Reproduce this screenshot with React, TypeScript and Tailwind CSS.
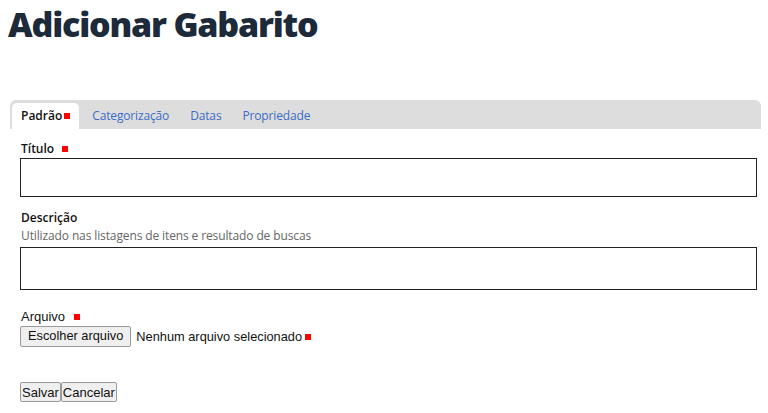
import React from "react";

const Req = ({ className = "" }: { className?: string }) => (
  <span className={`inline-block w-[6px] h-[6px] bg-[#ff0000] align-middle ${className}`} />
);

export default function App() {
  return (
    <div className="bg-white w-[768px] h-[413px] overflow-hidden text-[#222]" style={{ fontFamily: '"Open Sans", sans-serif' }}>
      <h1 className="pl-[8px] pt-[1px] text-[34px] leading-[46px] font-extrabold text-[#1c2a3a] tracking-[-1.2px]">Adicionar Gabarito</h1>
      <div className="ml-[10px] mr-[7px] mt-[53px] bg-[#dddddd] rounded-t-[6px] h-[29px] flex items-end pl-[2px] gap-0">
        <div className="bg-white rounded-t-[5px] h-[26px] px-[9px] flex items-center text-[12px] font-semibold text-[#111]">
          Padrão<Req className="ml-[2px]" />
        </div>
        <div className="h-[26px] flex items-center text-[12px] text-[#3b6cc5] ml-[13px] gap-[21px] tracking-[-0.15px]">
          <span>Categorização</span>
          <span>Datas</span>
          <span>Propriedade</span>
        </div>
      </div>
      <div className="pl-[20px] pr-[11px]">
        <div className="mt-[11px] text-[12px] font-semibold text-[#111] leading-[17px] flex items-center pl-[1px]">
          Título<Req className="ml-[8px]" />
        </div>
        <div className="mt-[1px] h-[39px] border-[#222] border-[1.5px]" />
        <div className="mt-[12px] text-[12px] font-semibold text-[#111] leading-[17px] pl-[1px]">Descrição</div>
        <div className="mt-[1px] text-[12px] text-[#666] leading-[18px] pl-[1px] tracking-[-0.12px]">Utilizado nas listagens de itens e resultado de buscas</div>
        <div className="mt-[2px] h-[43px] border-[#222] border-[1.5px]" />
        <div className="mt-[18px] text-[13px] leading-[17px] text-[#111] flex items-center pl-[1px]" style={{ fontFamily: '"Liberation Sans", sans-serif' }}>
          Arquivo<Req className="ml-[9px]" />
        </div>
        <div className="flex items-center mt-[1px]" style={{ fontFamily: '"Liberation Sans", sans-serif' }}>
          <button className="h-[21px] px-[7px] text-[12.8px] bg-[#efefef] border border-[#9a9a9a] rounded-[2px] text-[#111] leading-none">Escolher arquivo</button>
          <span className="ml-[5px] text-[12.8px] text-[#111]">Nenhum arquivo selecionado</span>
          <Req className="ml-[3px]" />
        </div>
        <div className="flex mt-[35px]" style={{ fontFamily: '"Liberation Sans", sans-serif' }}>
          <button className="h-[20px] px-[1px] text-[13px] bg-[#efefef] border border-[#9a9a9a] rounded-[2px] text-[#111] leading-none">Salvar</button>
          <button className="h-[20px] px-[1px] text-[13px] bg-[#efefef] border border-[#9a9a9a] rounded-[2px] text-[#111] leading-none">Cancelar</button>
        </div>
      </div>
    </div>
  );
}
